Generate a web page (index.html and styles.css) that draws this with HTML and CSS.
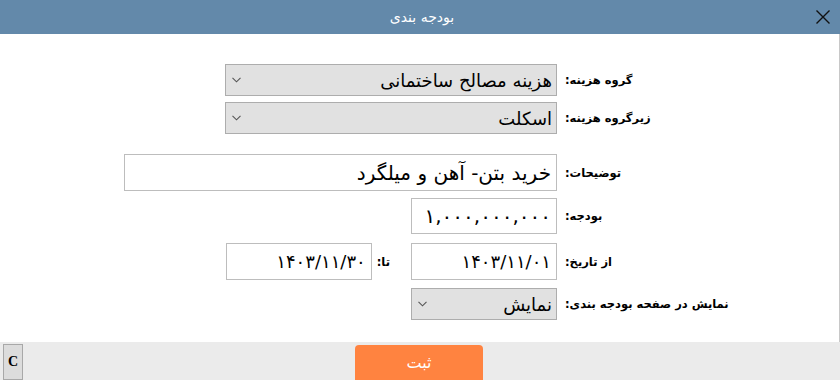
FILE: index.html
```html
<!DOCTYPE html>
<html lang="fa" dir="rtl">
<head>
  <meta charset="UTF-8">
  <meta name="viewport" content="width=device-width, initial-scale=1.0">
  <title>بودجه بندی</title>
  <link rel="stylesheet" href="styles.css">
</head>
<body>

  <div class="titlebar">
    <span class="title">بودجه بندی</span>
    <span class="close">
      <svg width="16" height="16" viewBox="0 0 16 16"><path d="M1.5 1.5 L14.5 14.5 M14.5 1.5 L1.5 14.5" stroke="#111" stroke-width="1.4" fill="none"/></svg>
    </span>
  </div>

  <div class="content">
    <div class="row row-group">
      <label class="label">گروه هزینه:</label>
      <div class="select wide">
        <span>هزینه مصالح ساختمانی</span>
        <svg class="chevron" width="9" height="6" viewBox="0 0 9 6"><path d="M0.5 0.8 L4.5 4.8 L8.5 0.8" stroke="#555" stroke-width="1.1" fill="none"/></svg>
      </div>
    </div>

    <div class="row row-sub">
      <label class="label">زیرگروه هزینه:</label>
      <div class="select wide">
        <span>اسکلت</span>
        <svg class="chevron" width="9" height="6" viewBox="0 0 9 6"><path d="M0.5 0.8 L4.5 4.8 L8.5 0.8" stroke="#555" stroke-width="1.1" fill="none"/></svg>
      </div>
    </div>

    <div class="row row-desc">
      <label class="label">توضیحات:</label>
      <div class="input desc">خرید بتن- آهن و میلگرد</div>
    </div>

    <div class="row row-budget">
      <label class="label">بودجه:</label>
      <div class="input small budget">۱,۰۰۰,۰۰۰,۰۰۰</div>
    </div>

    <div class="row row-dates">
      <label class="label">از تاریخ:</label>
      <div class="dates">
        <div class="input small date">۱۴۰۳/۱۱/۰۱</div>
        <label class="label to-label">تا:</label>
        <div class="input small date">۱۴۰۳/۱۱/۳۰</div>
      </div>
    </div>

    <div class="row row-show">
      <label class="label">نمایش در صفحه بودجه بندی:</label>
      <div class="select small">
        <span>نمایش</span>
        <svg class="chevron" width="9" height="6" viewBox="0 0 9 6"><path d="M0.5 0.8 L4.5 4.8 L8.5 0.8" stroke="#555" stroke-width="1.1" fill="none"/></svg>
      </div>
    </div>
  </div>

  <div class="footer">
    <button class="submit-button">ثبت</button>
    <button class="c-button">C</button>
  </div>

</body>
</html>
```

FILE: styles.css
```css
html, body {
  margin: 0;
  padding: 0;
}
body {
  width: 840px;
  height: 380px;
  display: flex;
  flex-direction: column;
  background-color: #ffffff;
  color: #000000;
  font-family: Tahoma, "DejaVu Sans", sans-serif;
  overflow: hidden;
}
.titlebar {
  height: 34px;
  flex-shrink: 0;
  background-color: #6389aa;
  display: flex;
  align-items: center;
  justify-content: center;
  position: relative;
}
.title {
  color: #ffffff;
  font-size: 14px;
  padding-left: 4px;
}
.close {
  position: absolute;
  left: 815px;
  top: 9px;
  width: 16px;
  height: 16px;
}
.content {
  flex: 1;
  border-right: 1px solid #c8c8c8;
  padding-top: 30px;
  box-sizing: border-box;
}
.row {
  display: grid;
  grid-template-columns: 274px 557px;
  column-gap: 8px;
  align-items: center;
}
.label {
  justify-self: end;
  font-size: 11.5px;
  font-weight: bold;
  white-space: nowrap;
}
.row-sub { margin-top: 6px; }
.row-desc { margin-top: 20px; }
.row-budget { margin-top: 7px; }
.row-dates { margin-top: 9px; }
.row-show { margin-top: 8px; }

.select {
  height: 32px;
  box-sizing: border-box;
  background-color: #e1e1e1;
  border: 1px solid #adadad;
  display: flex;
  align-items: center;
  padding: 0 4px 0 6px;
  font-size: 18px;
}
.chevron {
  margin-right: auto;
}
.wide {
  width: 332px;
}
.small {
  width: 146px;
}
.input {
  box-sizing: border-box;
  background-color: #ffffff;
  border: 1px solid #bdbdbd;
  display: flex;
  align-items: center;
  padding: 0 5px;
  font-size: 17px;
}
.desc {
  width: 433px;
  height: 37px;
  font-size: 20px;
}
.budget {
  height: 36px;
  font-size: 20px;
}
.date {
  height: 37px;
  font-size: 18px;
}
.dates {
  display: flex;
  align-items: center;
}
.to-label {
  margin-right: 21px;
  margin-left: 5px;
}
.footer {
  height: 38px;
  flex-shrink: 0;
  background-color: #ebebeb;
  display: flex;
  align-items: flex-end;
  position: relative;
}
.submit-button {
  width: 128px;
  height: 35px;
  margin-right: 357px;
  background-color: #ff8340;
  color: #ffffff;
  border: none;
  border-radius: 4px 4px 0 0;
  font-family: Tahoma, "DejaVu Sans", sans-serif;
  font-size: 16px;
}
.c-button {
  margin-right: auto;
  margin-left: 3px;
  width: 20px;
  height: 36px;
  padding: 0;
  background-color: #dcdcdc;
  border: 1px solid #a8a8a8;
  font-family: "Liberation Serif", serif;
  font-weight: bold;
  font-size: 14px;
  color: #000000;
}
```
